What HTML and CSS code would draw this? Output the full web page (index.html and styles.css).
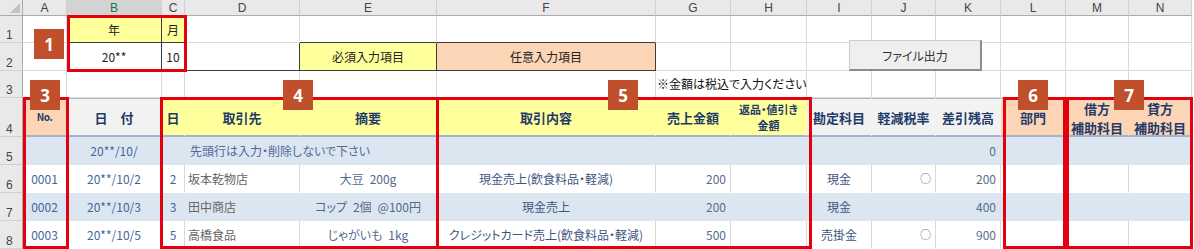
FILE: index.html
```html
<!DOCTYPE html>
<html lang="ja">
<head>
<meta charset="utf-8">
<title>売上帳</title>
<link rel="stylesheet" href="styles.css">
</head>
<body>
<div class="sheet">
  <!-- column headers -->
  <div class="ch corner"><svg width="10" height="10" viewBox="0 0 10 10"><polygon points="10,0 10,10 0,10" fill="#c3c3c3"/></svg></div>
  <div class="ch">A</div>
  <div class="ch sel">B</div>
  <div class="ch">C</div>
  <div class="ch">D</div>
  <div class="ch">E</div>
  <div class="ch">F</div>
  <div class="ch">G</div>
  <div class="ch">H</div>
  <div class="ch">I</div>
  <div class="ch">J</div>
  <div class="ch">K</div>
  <div class="ch">L</div>
  <div class="ch">M</div>
  <div class="ch">N</div>

  <!-- row 1 -->
  <div class="rh">1</div>
  <div class="c"></div>
  <div class="c yel dk dkt txt">年</div>
  <div class="c yel dk dkt txt">月</div>
  <div class="c"></div>
  <div class="c dkb"></div>
  <div class="c dkb"></div>
  <div class="c"></div><div class="c"></div><div class="c"></div><div class="c"></div><div class="c"></div><div class="c"></div><div class="c"></div><div class="c"></div>

  <!-- row 2 -->
  <div class="rh">2</div>
  <div class="c"></div>
  <div class="c dk txt">20**</div>
  <div class="c dk txt">10</div>
  <div class="c dk"></div>
  <div class="c yel dk txt">必須入力項目</div>
  <div class="c pch dk txt">任意入力項目</div>
  <div class="c"></div><div class="c"></div><div class="c"></div><div class="c"></div><div class="c"></div><div class="c"></div><div class="c"></div><div class="c"></div>

  <!-- row 3 -->
  <div class="rh">3</div>
  <div class="c"></div><div class="c"></div><div class="c"></div><div class="c"></div><div class="c"></div><div class="c"></div>
  <div class="c l txt span2 note">※金額は税込で入力ください</div>
  <div class="c"></div><div class="c"></div><div class="c"></div><div class="c"></div><div class="c"></div><div class="c"></div>

  <!-- row 4 : table header -->
  <div class="rh">4</div>
  <div class="c h pch no">No.</div>
  <div class="c h gry">日　付</div>
  <div class="c h yel">日</div>
  <div class="c h yel">取引先</div>
  <div class="c h yel">摘要</div>
  <div class="c h yel">取引内容</div>
  <div class="c h yel">売上金額</div>
  <div class="c h yel two sm"><span class="ln">返品・値引き</span><span class="ln">金額</span></div>
  <div class="c h gry">勘定科目</div>
  <div class="c h gry">軽減税率</div>
  <div class="c h gry">差引残高</div>
  <div class="c h pch">部門</div>
  <div class="c h pch two"><span class="ln">借方</span><span class="ln">補助科目</span></div>
  <div class="c h pch two"><span class="ln">貸方</span><span class="ln">補助科目</span></div>

  <!-- row 5 -->
  <div class="rh">5</div>
  <div class="c bl"></div>
  <div class="c bl">20**/10/</div>
  <div class="c bl"></div>
  <div class="c bl l span2 first">先頭行は入力・削除しないで下さい</div>
  <div class="c bl"></div>
  <div class="c bl"></div>
  <div class="c bl"></div>
  <div class="c bl"></div>
  <div class="c bl"></div>
  <div class="c bl r num">0</div>
  <div class="c bl"></div>
  <div class="c bl"></div>
  <div class="c bl"></div>

  <!-- row 6 -->
  <div class="rh">6</div>
  <div class="c wr">0001</div>
  <div class="c wr">20**/10/2</div>
  <div class="c wr">2</div>
  <div class="c wr l name">坂本乾物店</div>
  <div class="c wr g">大豆&#8194;200g</div>
  <div class="c wr d">現金売上(飲食料品・軽減)</div>
  <div class="c wr r num">200</div>
  <div class="c wr"></div>
  <div class="c wr d">現金</div>
  <div class="c wr r circ">○</div>
  <div class="c wr r num">200</div>
  <div class="c wr"></div>
  <div class="c wr"></div>
  <div class="c wr"></div>

  <!-- row 7 -->
  <div class="rh">7</div>
  <div class="c bl">0002</div>
  <div class="c bl">20**/10/3</div>
  <div class="c bl">3</div>
  <div class="c bl l name">田中商店</div>
  <div class="c bl g">コップ&#8194;2個&#8194;@100円</div>
  <div class="c bl d">現金売上</div>
  <div class="c bl r num">200</div>
  <div class="c bl"></div>
  <div class="c bl d">現金</div>
  <div class="c bl"></div>
  <div class="c bl r num">400</div>
  <div class="c bl"></div>
  <div class="c bl"></div>
  <div class="c bl"></div>

  <!-- row 8 -->
  <div class="rh">8</div>
  <div class="c wr">0003</div>
  <div class="c wr">20**/10/5</div>
  <div class="c wr">5</div>
  <div class="c wr l name">高橋食品</div>
  <div class="c wr g">じゃがいも&#8194;1kg</div>
  <div class="c wr d">クレジットカード売上(飲食料品・軽減)</div>
  <div class="c wr r num">500</div>
  <div class="c wr"></div>
  <div class="c wr d">売掛金</div>
  <div class="c wr r circ">○</div>
  <div class="c wr r num">900</div>
  <div class="c wr"></div>
  <div class="c wr"></div>
  <div class="c wr"></div>

  <!-- floating shapes over the sheet -->
  <div class="btn">ファイル出力</div>

  <div class="frame f1"></div>
  <div class="frame f3"></div>
  <div class="frame f4"></div>
  <div class="frame f5"></div>
  <div class="frame f6"></div>
  <div class="frame f7"></div>

  <div class="badge b1">1</div>
  <div class="badge b3">3</div>
  <div class="badge b4">4</div>
  <div class="badge b5">5</div>
  <div class="badge b6">6</div>
  <div class="badge b7">7</div>
</div>
</body>
</html>
```

FILE: styles.css
```css
* { box-sizing: border-box; margin: 0; padding: 0; }

body {
  background: #ffffff;
  width: 1194px;
  height: 249px;
  overflow: hidden;
  font-family: "Noto Sans CJK JP", "Noto Sans", sans-serif;
}

.sheet {
  position: relative;
  display: grid;
  grid-template-columns: 23px 44px 95px 23px 115px 137px 219px 75px 76px 65px 64px 65px 65px 63px 63px;
  grid-template-rows: 16px 27px 28px 27px 39px 28px 28px 28px 28px;
  width: 1192px;
}

/* column headers */
.ch {
  display: flex;
  align-items: center;
  justify-content: center;
  background: #e9e9e9;
  border-right: 1px solid #d0d0d0;
  border-bottom: 1px solid #ababab;
  font-family: "Liberation Sans", Arial, sans-serif;
  font-size: 12px;
  color: #444;
  padding-top: 1px;
}
.ch.sel { background: #d3d3d3; color: #217346; border-bottom-color: #217346; }
.corner { justify-content: flex-end; align-items: flex-end; padding: 0 2px 2px 0; border-right-color: #ababab; }
.corner svg { display: block; }

/* row headers */
.rh {
  display: flex;
  align-items: flex-end;
  justify-content: flex-start;
  padding: 0 0 0 6px;
  background: #e9e9e9;
  border-right: 1px solid #ababab;
  border-bottom: 1px solid #d0d0d0;
  font-family: "Liberation Sans", Arial, sans-serif;
  font-size: 12px;
  line-height: 14px;
  color: #444;
}

/* cells */
.c {
  display: flex;
  align-items: center;
  justify-content: center;
  text-align: center;
  border-right: 1px solid #dadada;
  border-bottom: 1px solid #dadada;
  font-size: 12px;
  line-height: 1;
  color: #44679a;
  white-space: nowrap;
  padding: 0 3px;
  font-feature-settings: "palt";
}
.l { justify-content: flex-start; text-align: left; }
.r { justify-content: flex-end; text-align: right; padding-right: 4px; }
.span2 { grid-column: span 2; }

.txt { color: #222; }
.note { padding-left: 1px; color: #111; }

.yel { background: #ffff9c; }
.pch { background: #fbd5b5; }
.gry { background: #f2f2f2; }

.dk { border-right-color: #3c3c3c; border-bottom-color: #3c3c3c; }
.dkt { border-top: 1px solid #3c3c3c; }
.dkb { border-bottom-color: #3c3c3c; }

/* header row */
.h {
  font-weight: 700;
  font-size: 13px;
  color: #1f3b6a;
  border-top: 1px solid #a9b9ce;
  border-bottom: 2px solid #a3b5cc;
  border-right-color: transparent;
}
.h.two { flex-direction: column; line-height: 19px; padding-top: 1px; }
.h.sm { font-size: 11px; line-height: 16px; padding-top: 0; }
.ln { display: block; }
.no { font-size: 10px; letter-spacing: -0.5px; }

/* data rows */
.bl { background: #dce6f1; border-right-color: #dce6f1; border-bottom-color: #dce6f1; }
.wr { background: #ffffff; border-bottom-color: #ffffff; }
.first { padding-left: 5px; color: #4d6a96; }
.name { color: #666; }
.g { color: #54688a; }
.d { color: #3d5680; }
.num { color: #5a6d8c; }
.circ { color: #5a6d8c; font-size: 11px; padding-right: 4px; }

/* floating button */
.btn {
  position: absolute;
  left: 849px;
  top: 40px;
  width: 133px;
  height: 31px;
  display: flex;
  align-items: center;
  justify-content: center;
  background: #efefef;
  border: 1px solid #cdcdcd;
  border-right: 2px solid #8c8c8c;
  border-bottom: 2px solid #8c8c8c;
  font-size: 12px;
  color: #333;
  font-feature-settings: "palt";
}

/* red callout frames */
.frame { position: absolute; border: 3px solid #e3000f; }
.f1 { left: 67px; top: 15px; width: 120px; height: 57px; }
.f3 { left: 23px; top: 97px; width: 46px; height: 152px; }
.f4 { left: 160px; top: 97px; width: 279px; height: 152px; }
.f5 { left: 436px; top: 97px; width: 376px; height: 152px; }
.f6 { left: 1003px; top: 97px; width: 63px; height: 152px; }
.f7 { left: 1066px; top: 97px; width: 127px; height: 152px; }

/* numbered badges */
.badge {
  position: absolute;
  width: 30px;
  height: 30px;
  display: flex;
  align-items: center;
  justify-content: center;
  background: #c0502b;
  color: #ffffff;
  font-family: "Noto Sans", "Liberation Sans", sans-serif;
  font-weight: 700;
  font-size: 17px;
}
.b1 { left: 34px; top: 29px; }
.b3 { left: 30px; top: 80px; }
.b4 { left: 283px; top: 80px; }
.b5 { left: 608px; top: 80px; }
.b6 { left: 1018px; top: 80px; }
.b7 { left: 1114px; top: 80px; }
```
